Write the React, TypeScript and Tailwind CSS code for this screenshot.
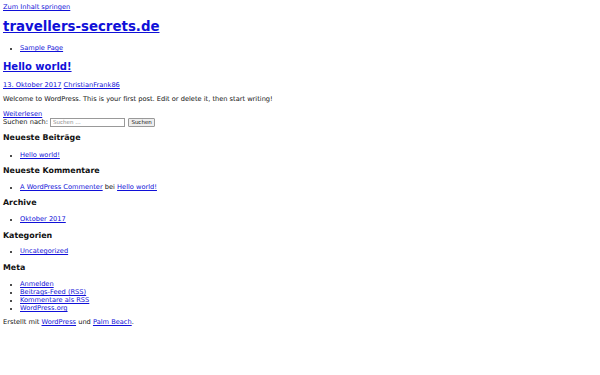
import React from 'react';

const link = 'text-[#1010d8] underline';

const WidgetTitle: React.FC<{ children: React.ReactNode; className?: string }> = ({ children, className }) => (
  <h2 className={`font-bold text-[7.9px] leading-[10px] ${className ?? ''}`}>{children}</h2>
);

const List: React.FC<{ items: React.ReactNode[]; className?: string }> = ({ items, className }) => (
  <ul className={`list-disc pl-[17px] ${className ?? ''}`}>
    {items.map((item, i) => (
      <li key={i} className="leading-[8px] marker:text-[5px]">
        {item}
      </li>
    ))}
  </ul>
);

const App: React.FC = () => {
  return (
    <div
      className="min-h-[375px] bg-white text-[#111] text-[6.65px] leading-[8px] px-[3px]"
      style={{ fontFamily: '"DejaVu Sans", sans-serif' }}
    >
      <a href="#content" className={`${link} inline-block pt-[3px]`}>
        Zum Inhalt springen
      </a>

      <h1 className="mt-[8px] font-bold text-[13.35px] leading-[15px]">
        <a href="#" className={link}>travellers-secrets.de</a>
      </h1>

      <List className="mt-[10px]" items={[<a href="#" className={link}>Sample Page</a>]} />

      <h2 className="mt-[9px] font-bold text-[10px] leading-[12px]">
        <a href="#" className={link}>Hello world!</a>
      </h2>

      <div className="mt-[8px]">
        <a href="#" className={link}>13. Oktober 2017</a>{' '}
        <a href="#" className={link}>ChristianFrank86</a>
      </div>

      <p className="mt-[6px]">Welcome to WordPress. This is your first post. Edit or delete it, then start writing!</p>

      <a href="#" className={`${link} block mt-[7px]`}>Weiterlesen</a>

      <form className="flex items-center h-[8px]">
        <label>Suchen nach:</label>
        <input
          placeholder="Suchen …"
          className="ml-[2px] w-[75px] h-[9px] border border-[#999] px-[2px] text-[5.5px] placeholder:text-[#888] outline-none"
        />
        <button
          type="button"
          className="ml-[3px] w-[27px] h-[9px] border border-[#999] bg-[#eee] text-[5.5px] leading-[7px] rounded-[1px]"
        >
          Suchen
        </button>
      </form>

      <WidgetTitle className="mt-[7px]">Neueste Beiträge</WidgetTitle>
      <List className="mt-[8px]" items={[<a href="#" className={link}>Hello world!</a>]} />

      <WidgetTitle className="mt-[7px]">Neueste Kommentare</WidgetTitle>
      <List
        className="mt-[7px]"
        items={[
          <span>
            <a href="#" className={link}>A WordPress Commenter</a> bei{' '}
            <a href="#" className={link}>Hello world!</a>
          </span>,
        ]}
      />

      <WidgetTitle className="mt-[7px]">Archive</WidgetTitle>
      <List className="mt-[7px]" items={[<a href="#" className={link}>Oktober 2017</a>]} />

      <WidgetTitle className="mt-[8px]">Kategorien</WidgetTitle>
      <List className="mt-[6px]" items={[<a href="#" className={link}>Uncategorized</a>]} />

      <WidgetTitle className="mt-[8px]">Meta</WidgetTitle>
      <List
        className="mt-[7px]"
        items={[
          <a href="#" className={link}>Anmelden</a>,
          <a href="#" className={link}>Beitrags-Feed (RSS)</a>,
          <a href="#" className={link}>Kommentare als RSS</a>,
          <a href="#" className={link}>WordPress.org</a>,
        ]}
      />

      <p className="mt-[6px]">
        Erstellt mit <a href="#" className={link}>WordPress</a> und{' '}
        <a href="#" className={link}>Palm Beach</a>.
      </p>
    </div>
  );
};

export default App;
